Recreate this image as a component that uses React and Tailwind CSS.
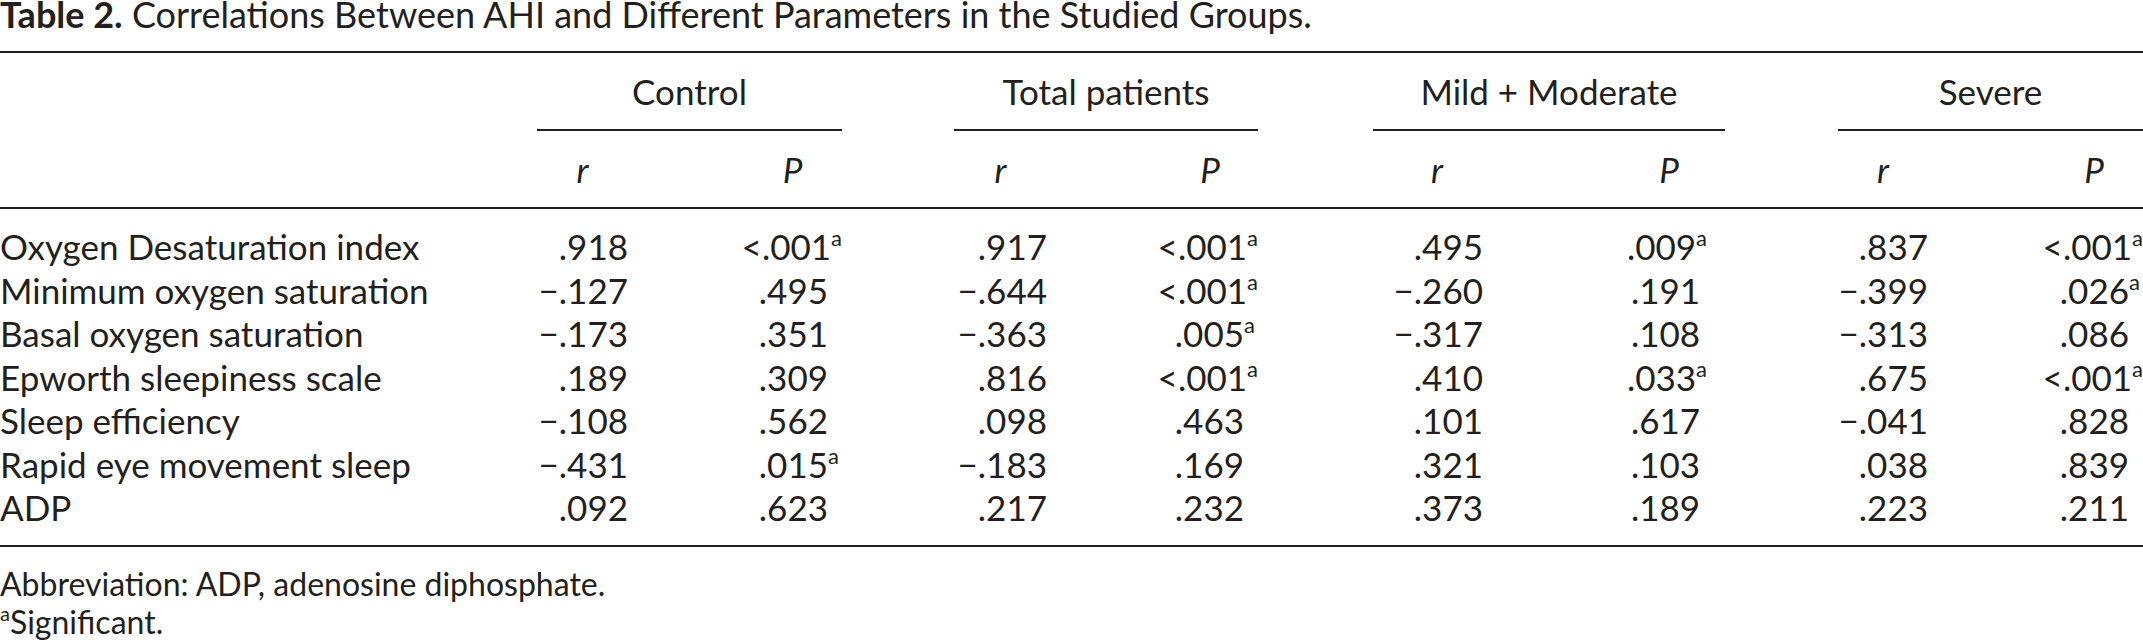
import React from 'react';

// 18 tracks: label | Control r,gap,P | gap | Total r,gap,P | gap | pad, Mild r,gap,P, pad | gap | Severe r,gap,P
const GRID = 'grid grid-cols-[537px_91px_115px_99px_112px_93px_115px_96px_115px_18px_92px_148px_76px_18px_113px_90px_117px_98px]';

const GROUPS = [
  { label: 'Control', cls: 'col-start-2 col-span-3' },
  { label: 'Total patients', cls: 'col-start-6 col-span-3' },
  { label: 'Mild + Moderate', cls: 'col-start-10 col-span-5' },
  { label: 'Severe', cls: 'col-start-16 col-span-3' },
];

// where each r / P value sits in the grid
const R_COLS = ['col-start-2', 'col-start-6', 'col-start-11', 'col-start-16'];
const P_COLS = ['col-start-4', 'col-start-8', 'col-start-13', 'col-start-18'];

// trailing * = significant (superscript a)
const ROWS = [
  ['Oxygen Desaturation index', '.918', '<.001*', '.917', '<.001*', '.495', '.009*', '.837', '<.001*'],
  ['Minimum oxygen saturation', '\u2212.127', '.495', '\u2212.644', '<.001*', '\u2212.260', '.191', '\u2212.399', '.026*'],
  ['Basal oxygen saturation', '\u2212.173', '.351', '\u2212.363', '.005*', '\u2212.317', '.108', '\u2212.313', '.086'],
  ['Epworth sleepiness scale', '.189', '.309', '.816', '<.001*', '.410', '.033*', '.675', '<.001*'],
  ['Sleep efficiency', '\u2212.108', '.562', '.098', '.463', '.101', '.617', '\u2212.041', '.828'],
  ['Rapid eye movement sleep', '\u2212.431', '.015*', '\u2212.183', '.169', '.321', '.103', '.038', '.839'],
  ['ADP', '.092', '.623', '.217', '.232', '.373', '.189', '.223', '.211'],
];

function PValue({ v }) {
  const sig = v.endsWith('*');
  return (
    <span className="flex justify-end">
      <span>{sig ? v.slice(0, -1) : v}</span>
      <span className="w-[14px] text-left">
        {sig && <span className="text-[22px] leading-none align-[14px]">a</span>}
      </span>
    </span>
  );
}

export default function App() {
  return (
    <div className="w-[2143px] bg-white text-[#231f20] font-['Lato',sans-serif] text-[35px]">
      <div className="text-[36px] leading-[28px] whitespace-nowrap">
        <span className="font-bold">Table 2.</span> Correlations Between AHI and Different Parameters in the Studied Groups.
      </div>

      <div className="mt-[23px] border-t-2 border-[#231f20]">
        <div className={GRID}>
          {GROUPS.map(g => (
            <div key={g.label}
                 className={`${g.cls} h-[78px] flex items-center justify-center leading-[42px] border-b-2 border-[#231f20]`}>
              {g.label}
            </div>
          ))}
        </div>

        <div className={`${GRID} h-[78px] items-center leading-[42px] italic border-b-2 border-[#231f20]`}>
          {R_COLS.map((c, i) => (
            <React.Fragment key={i}>
              <div className={`${c} text-center`}>r</div>
              <div className={`${P_COLS[i]} text-center`}>P</div>
            </React.Fragment>
          ))}
        </div>

        <div className={`${GRID} pt-[16px] pb-[15px] leading-[43.5px] border-b-2 border-[#231f20]`}>
          {ROWS.map(([label, ...vals]) => (
            <React.Fragment key={label}>
              <div className="col-start-1 whitespace-nowrap">{label}</div>
              {vals.map((v, i) => {
                const g = Math.floor(i / 2);
                return i % 2 === 0
                  ? <div key={i} className={`${R_COLS[g]} text-right`}>{v}</div>
                  : <div key={i} className={P_COLS[g]}><PValue v={v} /></div>;
              })}
            </React.Fragment>
          ))}
        </div>
      </div>

      <div className="mt-[18px] text-[32px] leading-[38px]">
        <div>Abbreviation: ADP, adenosine diphosphate.</div>
        <div><span className="text-[20px] leading-none align-[13px]">a</span>Significant.</div>
      </div>
    </div>
  );
}
